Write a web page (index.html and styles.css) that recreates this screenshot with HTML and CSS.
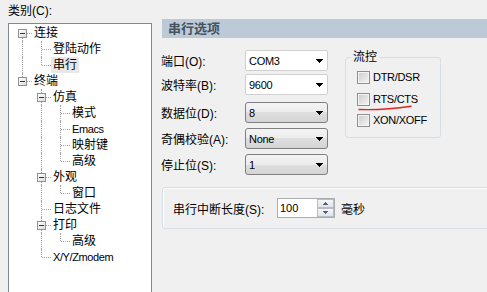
FILE: index.html
```html
<!DOCTYPE html>
<html>
    <head>
        <meta charset="UTF-8">
        <title>会话选项</title>
        <link rel="stylesheet" href="styles.css">
    </head>
    <body>
        <div class="dlg">
            <div class="cat">
                <div class="cat-label">类别(C):</div>
                <div class="tree">
                    <div class="node"><i class="g f"><b class="exp"></b></i><span class="txt">连接</span></div>
                    <div class="node"><i class="g v"></i><i class="g t"></i><span class="txt">登陆动作</span></div>
                    <div class="node sel"><i class="g v"></i><i class="g l"></i><span class="txt">串行</span></div>
                    <div class="node"><i class="g l"><b class="exp"></b></i><span class="txt">终端</span></div>
                    <div class="node"><i class="g"></i><i class="g t"><b class="exp"></b></i><span class="txt">仿真</span></div>
                    <div class="node"><i class="g"></i><i class="g v"></i><i class="g t"></i><span class="txt">模式</span></div>
                    <div class="node"><i class="g"></i><i class="g v"></i><i class="g t"></i><span class="txt lat">Emacs</span></div>
                    <div class="node"><i class="g"></i><i class="g v"></i><i class="g t"></i><span class="txt">映射键</span></div>
                    <div class="node"><i class="g"></i><i class="g v"></i><i class="g l"></i><span class="txt">高级</span></div>
                    <div class="node"><i class="g"></i><i class="g t"><b class="exp"></b></i><span class="txt">外观</span></div>
                    <div class="node"><i class="g"></i><i class="g v"></i><i class="g l"></i><span class="txt">窗口</span></div>
                    <div class="node"><i class="g"></i><i class="g t"></i><span class="txt">日志文件</span></div>
                    <div class="node"><i class="g"></i><i class="g t"><b class="exp"></b></i><span class="txt">打印</span></div>
                    <div class="node"><i class="g"></i><i class="g v"></i><i class="g l"></i><span class="txt">高级</span></div>
                    <div class="node"><i class="g"></i><i class="g l"></i><span class="txt lat">X/Y/Zmodem</span></div>
                </div>
            </div>

            <div class="pane">
                <div class="pane-title">串行选项</div>
                <div class="pane-body">
                    <div class="top">
                        <div class="fields">
                            <div class="row">
                                <span class="lbl">端口(O):</span>
                                <div class="combo edit"><span>COM3</span><svg class="arrow" width="7" height="4"><path d="M0 0h7v1h-7zM1 1h5v1h-5zM2 2h3v1h-3zM3 3h1v1h-1z"/></svg></div>
                            </div>
                            <div class="row r2">
                                <span class="lbl">波特率(B):</span>
                                <div class="combo edit"><span>9600</span><svg class="arrow" width="7" height="4"><path d="M0 0h7v1h-7zM1 1h5v1h-5zM2 2h3v1h-3zM3 3h1v1h-1z"/></svg></div>
                            </div>
                            <div class="row r3">
                                <span class="lbl">数据位(D):</span>
                                <div class="combo list"><span>8</span><svg class="arrow" width="7" height="4"><path d="M0 0h7v1h-7zM1 1h5v1h-5zM2 2h3v1h-3zM3 3h1v1h-1z"/></svg></div>
                            </div>
                            <div class="row">
                                <span class="lbl">奇偶校验(A):</span>
                                <div class="combo list"><span>None</span><svg class="arrow" width="7" height="4"><path d="M0 0h7v1h-7zM1 1h5v1h-5zM2 2h3v1h-3zM3 3h1v1h-1z"/></svg></div>
                            </div>
                            <div class="row">
                                <span class="lbl">停止位(S):</span>
                                <div class="combo list"><span>1</span><svg class="arrow" width="7" height="4"><path d="M0 0h7v1h-7zM1 1h5v1h-5zM2 2h3v1h-3zM3 3h1v1h-1z"/></svg></div>
                            </div>
                        </div>

                        <fieldset class="flow">
                            <legend>流控</legend>
                            <div class="chk c1"><i class="box"></i><span>DTR/DSR</span></div>
                            <div class="chk c2"><i class="box"></i><span>RTS/CTS</span></div>
                            <div class="chk c3"><i class="box"></i><span>XON/XOFF</span></div>
                            <!-- 红色手绘下划线 -->
                            <svg class="mark" width="56" height="8"><path d="M1 6.5C15 7 36 5.8 53 3.2" fill="none" stroke="#e3221b" stroke-width="1.4" stroke-linecap="round"/></svg>
                        </fieldset>
                    </div>

                    <div class="brk">
                        <span class="brk-lbl">串行中断长度(S):</span>
                        <div class="spin">
                            <span class="spin-val">100</span>
                            <div class="spin-btns">
                                <span><svg width="5" height="3"><path d="M2 0h1v1h-1zM1 1h3v1h-3zM0 2h5v1h-5z" fill="#4d5f80"/></svg></span>
                                <span><svg width="5" height="3"><path d="M0 0h5v1h-5zM1 1h3v1h-3zM2 2h1v1h-1z" fill="#4d5f80"/></svg></span>
                            </div>
                        </div>
                        <span class="unit">毫秒</span>
                    </div>
                </div>
            </div>
        </div>
    </body>
</html>
```
FILE: styles.css
```css
body{
    margin: 0;
    background: #f0f0f0;
    font-family: "Liberation Sans", "Noto Sans CJK SC", sans-serif;
    font-size: 12px;
    color: #000;
    overflow: hidden;
}
.dlg{
    display: flex;
    height: 292px;
}

/* 左侧类别树 */
.cat{
    flex: none;
    width: 144px;
    padding: 5px 0 0 8px;
}
.cat-label{
    height: 18px;
    line-height: 13px;
}
.tree{
    height: 280px;
    background: #fff;
    border: 1px solid #828790;
    padding: 1px 0 0 4px;
}
.node{
    display: flex;
    height: 16px;
    line-height: 16px;
}
.g{
    position: relative;
    flex: none;
    width: 19px;
    height: 16px;
}
.g::before,
.g::after{
    content: "";
    position: absolute;
}
.v::before,
.t::before{
    left: 9px;
    top: 0;
    height: 16px;
    border-left: 1px dotted #a0a0a0;
}
.l::before{
    left: 9px;
    top: 0;
    height: 8px;
    border-left: 1px dotted #a0a0a0;
}
.f::before{
    left: 9px;
    top: 8px;
    height: 8px;
    border-left: 1px dotted #a0a0a0;
}
.t::after,
.l::after,
.f::after{
    left: 10px;
    top: 8px;
    width: 9px;
    border-top: 1px dotted #a0a0a0;
}
.exp{
    position: absolute;
    left: 5px;
    top: 4px;
    z-index: 1;
    width: 9px;
    height: 9px;
    box-sizing: border-box;
    border: 1px solid #919191;
    background: linear-gradient(135deg, #fff, #dcdcdc);
}
.exp::before{
    content: "";
    position: absolute;
    left: 1px;
    top: 3px;
    width: 5px;
    height: 1px;
    background: #22355a;
}
.txt{
    padding: 0 2px;
    white-space: nowrap;
}
.sel .txt{
    background: #e8e8e8;
}
.lat{
    font-size: 11px;
    letter-spacing: -0.4px;
}

/* 右侧面板 */
.pane{
    flex: none;
    width: 340px;
    margin-left: 10px;
    padding-top: 19px;
}
.pane-title{
    height: 19px;
    line-height: 19px;
    padding-left: 6px;
    background: #bccad8;
    color: #46525e;
    font-size: 13px;
    font-weight: bold;
}
.pane-body{
    margin-left: -1px;
    padding-top: 12px;
}
.top{
    display: flex;
    align-items: flex-start;
}
.fields{
    width: 167px;
    margin-right: 17px;
}
.row{
    display: flex;
    align-items: center;
    height: 21px;
    margin-top: 5px;
}
.row:first-child{
    margin-top: 0;
}
.row.r2{
    margin-top: 3px;
}
.row.r3{
    margin-top: 7px;
}
.lbl{
    width: 84px;
    white-space: nowrap;
}
.combo{
    display: flex;
    align-items: center;
    justify-content: space-between;
    width: 83px;
    height: 21px;
    box-sizing: border-box;
    padding: 0 4px 0 3px;
    font-size: 11px;
    letter-spacing: -0.3px;
}
.combo.edit{
    background: #fff;
    border: 1px solid #d0d0d0;
    border-radius: 2px;
}
.combo.list{
    background: linear-gradient(#f4f4f4, #ececec 50%, #dfdfdf 50%, #d4d4d4);
    border: 1px solid #7f7f7f;
    border-radius: 3px;
}
.arrow{
    display: block;
}

/* 流控 */
.flow{
    position: relative;
    width: 96px;
    height: 88px;
    box-sizing: border-box;
    margin: 0;
    padding: 0;
    border: 1px solid #d5dfe5;
    border-radius: 3px;
}
.flow legend{
    margin-left: 5px;
    padding: 0 2px;
    line-height: 14px;
}
.chk{
    display: flex;
    align-items: center;
    height: 16px;
    margin-left: 11px;
    font-size: 11px;
    letter-spacing: -0.3px;
}
.chk.c1{
    margin-top: 5px;
}
.chk.c2{
    margin-top: 6px;
}
.chk.c3{
    margin-top: 5px;
}
.box{
    width: 13px;
    height: 13px;
    box-sizing: border-box;
    margin-right: 3px;
    border: 1px solid #8e8f8f;
    background: linear-gradient(135deg, #cbcbcb, #f6f6f6);
    box-shadow: inset 0 0 0 1px #f4f4f4;
}
.mark{
    position: absolute;
    left: 12px;
    top: 39px;
}

/* 串行中断长度 */
.brk{
    display: flex;
    align-items: center;
    height: 42px;
    box-sizing: border-box;
    margin: 12px 0 0 1px;
    padding-left: 10px;
    border: 1px solid #d5dfe5;
    border-radius: 3px;
    box-shadow: inset 1px 1px 0 #fff;
}
.brk-lbl{
    width: 104px;
    white-space: nowrap;
}
.spin{
    display: flex;
    width: 58px;
    height: 20px;
    box-sizing: border-box;
    border: 1px solid #abadb3;
    background: #fff;
}
.spin-val{
    flex: 1;
    padding-left: 2px;
    line-height: 18px;
    font-size: 11px;
}
.spin-btns{
    display: flex;
    flex-direction: column;
    width: 17px;
}
.spin-btns span{
    flex: 1;
    display: flex;
    align-items: center;
    justify-content: center;
    border: 1px solid #b8bcc4;
    background: linear-gradient(#f6f6f6, #dfe3e8);
}
.spin-btns svg{
    display: block;
}
.unit{
    margin-left: 6px;
}
```
